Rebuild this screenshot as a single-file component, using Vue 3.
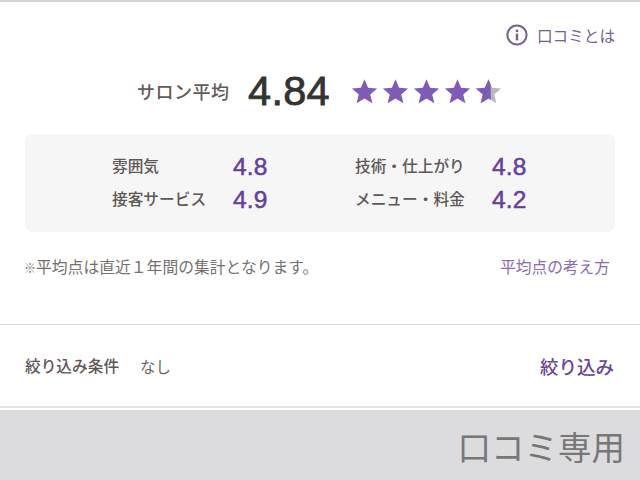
<script setup>
const star = "M12 1.2 15.2 8.6 23.2 9.3 17.1 14.6 19 22.5 12 18.3 5 22.5 6.9 14.6 0.8 9.3 8.8 8.6Z";
const stars = [1, 2, 3, 4];
const left = [
  { label: "雰囲気", score: "4.8" },
  { label: "接客サービス", score: "4.9" },
];
const right = [
  { label: "技術・仕上がり", score: "4.8" },
  { label: "メニュー・料金", score: "4.2" },
];
</script>

<template>
  <div class="page">
    <div class="top">
      <div class="help">
        <svg class="info" width="22" height="22" viewBox="0 0 22 22">
          <circle cx="11" cy="11" r="9.6" fill="none" stroke="#75608f" stroke-width="2" />
          <circle cx="11" cy="6.9" r="1.4" fill="#75608f" />
          <rect x="9.8" y="9.6" width="2.4" height="6.8" fill="#75608f" />
        </svg>
        <span>口コミとは</span>
      </div>
      <div class="summary">
        <span class="sum-label">サロン平均</span>
        <span class="sum-score">4.84</span>
        <div class="stars">
          <svg v-for="s in stars" :key="s" width="27" height="27" viewBox="0 0 24 24">
            <path :d="star" fill="#7f5bb4" />
          </svg>
          <svg width="27" height="27" viewBox="0 0 24 24">
            <defs>
              <clipPath id="half"><rect x="0" y="0" width="14" height="24" /></clipPath>
            </defs>
            <path :d="star" fill="#b9b9b9" />
            <path :d="star" fill="#7f5bb4" clip-path="url(#half)" />
          </svg>
        </div>
      </div>
      <div class="panel">
        <div class="col col-left">
          <div v-for="r in left" :key="r.label" class="row">
            <span class="label">{{ r.label }}</span>
            <span class="score">{{ r.score }}</span>
          </div>
        </div>
        <div class="col col-right">
          <div v-for="r in right" :key="r.label" class="row">
            <span class="label">{{ r.label }}</span>
            <span class="score">{{ r.score }}</span>
          </div>
        </div>
      </div>
      <div class="note">
        <span class="note-text"><span class="mark">※</span>平均点は直近１年間の集計となります。</span>
        <span class="note-link">平均点の考え方</span>
      </div>
    </div>
    <div class="filter">
      <span class="f-label">絞り込み条件</span>
      <span class="f-value">なし</span>
      <span class="f-link">絞り込み</span>
    </div>
    <div class="foot"><span>口コミ専用</span></div>
  </div>
</template>

<style scoped>
.page {
  width: 640px;
  height: 480px;
  overflow: hidden;
  background: #fff;
  display: flex;
  flex-direction: column;
  font-family: "Noto Sans CJK JP", "Liberation Sans", sans-serif;
}
.top {
  height: 325px;
  box-sizing: border-box;
  border-top: 2px solid #d4d4d4;
  border-bottom: 1px solid #e0e0e0;
  padding: 0 25px 0 25px;
  display: flex;
  flex-direction: column;
}
.help {
  display: flex;
  justify-content: flex-end;
  align-items: center;
  gap: 9px;
  height: 23px;
  margin-top: 21px;
  font-size: 15.6px;
  color: #75608f;
}
.summary {
  display: flex;
  align-items: center;
  height: 40px;
  margin-top: 25px;
  padding-left: 112px;
}
.sum-label {
  width: 111px;
  font-size: 18px;
  letter-spacing: 0.5px;
  font-weight: 500;
  color: #645a5a;
}
.sum-score {
  width: 103px;
  font-family: "Liberation Sans", sans-serif;
  font-size: 41.5px;
  font-weight: 400;
  letter-spacing: 0.3px;
  color: #333;
  -webkit-text-stroke: 0.8px #333;
}
.stars {
  display: flex;
  gap: 4px;
}
.panel {
  display: flex;
  height: 98px;
  margin-top: 23px;
  background: #f6f6f6;
  border-radius: 7px;
  padding-top: 18px;
  box-sizing: border-box;
}
.col {
  display: flex;
  flex-direction: column;
  gap: 4px;
}
.col-left { width: 330px; padding-left: 87px; box-sizing: border-box; }
.row {
  display: flex;
  align-items: center;
  height: 29px;
}
.col-left .label { width: 121px; }
.col-right .label { width: 137px; }
.label {
  padding-bottom: 2px;
  font-size: 15.7px;
  font-weight: 500;
  color: #5f5656;
}
.score {
  font-family: "Liberation Sans", sans-serif;
  font-size: 24.5px;
  letter-spacing: 0.2px;
  color: #66409a;
  -webkit-text-stroke: 0.5px #66409a;
}
.note {
  display: flex;
  justify-content: space-between;
  align-items: center;
  height: 22px;
  margin-top: 23px;
  margin-left: -1px;
  padding-right: 5px;
  font-size: 15.8px;
}
.note-text { color: #757070; }
.mark { font-size: 12px; }
.note-link { color: #8c6bb0; font-size: 15.7px; }
.filter {
  height: 83px;
  box-sizing: border-box;
  border-bottom: 2px solid #e4e4e4;
  padding: 0 26px 0 25px;
  display: flex;
  align-items: center;
}
.f-label {
  width: 115px;
  font-size: 15.7px;
  font-weight: 500;
  color: #5f5656;
}
.f-value {
  font-size: 15.5px;
  color: #6a6464;
}
.f-link {
  margin-left: auto;
  font-size: 18.5px;
  font-weight: 500;
  color: #6b4595;
}
.foot {
  flex: 1;
  margin-top: 2px;
  background: #dcdcde;
  display: flex;
  justify-content: flex-end;
  align-items: center;
  padding-right: 15px;
  font-size: 33.5px;
  color: #777;
}
</style>
